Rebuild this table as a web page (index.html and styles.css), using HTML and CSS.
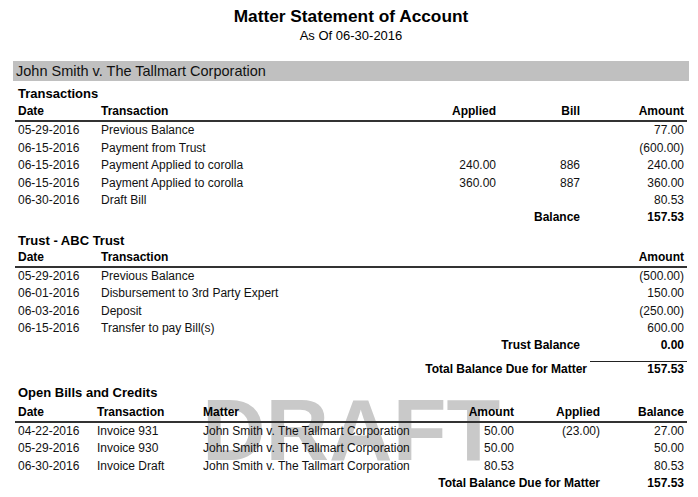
FILE: index.html
```html
<!DOCTYPE html>
<html>
<head>
<meta charset="utf-8">
<title>Matter Statement of Account</title>
<link rel="stylesheet" href="styles.css">
</head>
<body>
<div class="page">
  <div class="watermark">DRAFT</div>
  <div class="content">
    <h1 class="title">Matter Statement of Account</h1>
    <div class="subtitle">As Of 06-30-2016</div>
    <div class="matter-bar">John Smith v. The Tallmart Corporation</div>

    <section class="section sec-trans">
      <h2 class="section-title">Transactions</h2>
      <div class="grid trans head">
        <div>Date</div><div>Transaction</div><div class="r">Applied</div><div class="r">Bill</div><div class="r">Amount</div>
      </div>
      <div class="rows">
        <div class="grid trans"><div>05-29-2016</div><div>Previous Balance</div><div></div><div></div><div class="r">77.00</div></div>
        <div class="grid trans"><div>06-15-2016</div><div>Payment from Trust</div><div></div><div></div><div class="r">(600.00)</div></div>
        <div class="grid trans"><div>06-15-2016</div><div>Payment Applied to corolla</div><div class="r">240.00</div><div class="r">886</div><div class="r">240.00</div></div>
        <div class="grid trans"><div>06-15-2016</div><div>Payment Applied to corolla</div><div class="r">360.00</div><div class="r">887</div><div class="r">360.00</div></div>
        <div class="grid trans"><div>06-30-2016</div><div>Draft Bill</div><div></div><div></div><div class="r">80.53</div></div>
        <div class="grid trans sum"><div class="r span4">Balance</div><div class="r">157.53</div></div>
      </div>
    </section>

    <section class="section sec-trust">
      <h2 class="section-title">Trust - ABC Trust</h2>
      <div class="grid trust head">
        <div>Date</div><div>Transaction</div><div class="r">Amount</div>
      </div>
      <div class="rows">
        <div class="grid trust"><div>05-29-2016</div><div>Previous Balance</div><div class="r">(500.00)</div></div>
        <div class="grid trust"><div>06-01-2016</div><div>Disbursement to 3rd Party Expert</div><div class="r">150.00</div></div>
        <div class="grid trust"><div>06-03-2016</div><div>Deposit</div><div class="r">(250.00)</div></div>
        <div class="grid trust"><div>06-15-2016</div><div>Transfer to pay Bill(s)</div><div class="r">600.00</div></div>
        <div class="grid trust sum"><div class="r span2">Trust Balance</div><div class="r">0.00</div></div>
      </div>
      <div class="grid total sum">
        <div class="r">Total Balance Due for Matter</div><div class="r ruled">157.53</div>
      </div>
    </section>

    <section class="section sec-bills">
      <h2 class="section-title">Open Bills and Credits</h2>
      <div class="grid bills head">
        <div>Date</div><div>Transaction</div><div>Matter</div><div class="r">Amount</div><div class="r">Applied</div><div class="r">Balance</div>
      </div>
      <div class="rows">
        <div class="grid bills"><div>04-22-2016</div><div>Invoice 931</div><div>John Smith v. The Tallmart Corporation</div><div class="r">50.00</div><div class="r">(23.00)</div><div class="r">27.00</div></div>
        <div class="grid bills"><div>05-29-2016</div><div>Invoice 930</div><div>John Smith v. The Tallmart Corporation</div><div class="r">50.00</div><div class="r"></div><div class="r">50.00</div></div>
        <div class="grid bills"><div>06-30-2016</div><div>Invoice Draft</div><div>John Smith v. The Tallmart Corporation</div><div class="r">80.53</div><div class="r"></div><div class="r">80.53</div></div>
        <div class="grid bills sum"><div class="r span5">Total Balance Due for Matter</div><div class="r">157.53</div></div>
      </div>
    </section>
  </div>
</div>
</body>
</html>
```

FILE: styles.css
```css
* { box-sizing: border-box; }

html, body {
  margin: 0;
  padding: 0;
  background: #ffffff;
}

body {
  font-family: "Liberation Sans", Arial, sans-serif;
  color: #111111;
  font-size: 12px;
}

.page {
  position: relative;
  width: 698px;
  height: 497px;
  overflow: hidden;
  padding: 0 9px 0 13px;
}

.watermark {
  position: absolute;
  left: 202px;
  top: 386px;
  font-size: 88px;
  line-height: 88px;
  font-weight: bold;
  color: #c9c9c9;
  letter-spacing: 0;
  z-index: 0;
  white-space: nowrap;
}

.content {
  position: relative;
  z-index: 1;
}

.title {
  margin: 0;
  padding-top: 6px;
  font-size: 17.3px;
  line-height: 20px;
  font-weight: bold;
  text-align: center;
  color: #000;
}

.subtitle {
  margin-top: 2px;
  font-size: 13px;
  line-height: 16px;
  text-align: center;
  color: #000;
}

.matter-bar {
  margin-top: 17px;
  height: 20px;
  background: #c0c0c0;
  font-size: 14.5px;
  line-height: 20px;
  padding: 0 0 0 3px;
  color: #111;
}

.section {
  margin: 0 2px;
}

.section-title {
  margin: 0;
  padding-left: 3px;
  font-size: 13px;
  line-height: 17px;
  font-weight: bold;
  color: #000;
}

.sec-trans { margin-top: 4px; }
.sec-trust { margin-top: 5px; }
.sec-bills { margin-top: 8px; }

.grid {
  display: grid;
  line-height: 17.4px;
}

.grid > div {
  padding: 0 3px;
  white-space: nowrap;
}

.head {
  line-height: 17px;
  font-weight: bold;
  color: #000;
  border-bottom: 2px solid #333;
}

.sec-trans .head { margin-top: 1px; }
.sec-bills .head { margin-top: 3px; }

.rows { padding-top: 0.4px; }
.sec-trust .rows { padding-top: 0; }
.sec-bills .rows { padding-top: 0; }

.r { text-align: right; }

.sum {
  font-weight: bold;
  color: #000;
}

.trans { grid-template-columns: 83px 322px 79px 84px 104px; }
.trust { grid-template-columns: 83px 485px 104px; }
.bills { grid-template-columns: 79px 106px 230px 87px 86px 84px; }
.total { grid-template-columns: 1fr 97px; line-height: 14px; margin-top: 6px; }

.span2 { grid-column: 1 / 3; }
.span4 { grid-column: 1 / 5; }
.span5 { grid-column: 1 / 6; }

.total > div { padding-top: 1px; }
.total > .ruled {
  border-top: 1px solid #222;
  padding-top: 0;
}
```
